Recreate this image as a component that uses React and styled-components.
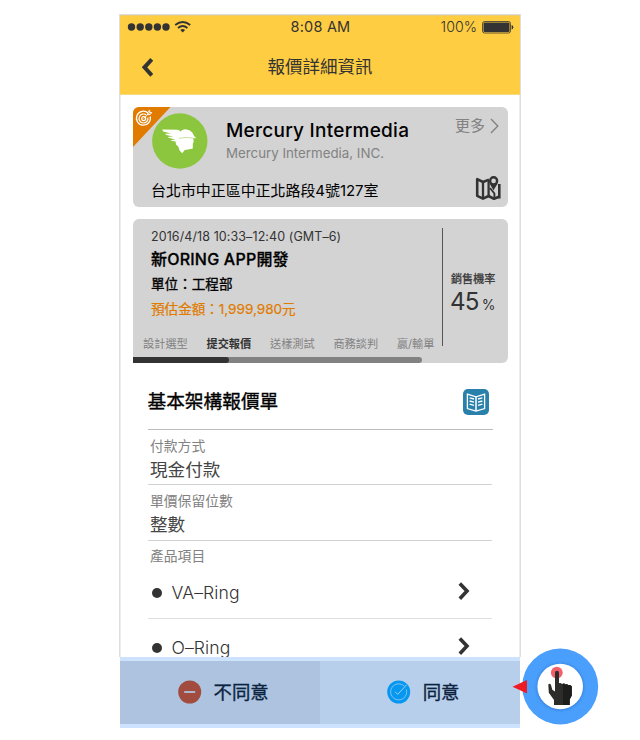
import React from "react";
import styled, { createGlobalStyle } from "styled-components";

const GlobalStyle = createGlobalStyle`
  * { box-sizing: border-box; }
  body {
    margin: 0;
    background: #fff;
    color: #333;
    font-family: Inter, "Noto Sans CJK TC", sans-serif;
  }
`;

const Text = styled.span`
  display: block;
  flex: none;
  white-space: nowrap;
  font-size: ${(p) => p.$size}px;
  line-height: ${(p) => p.$line || 20}px;
  letter-spacing: ${(p) => p.$track || 0}px;
  color: ${(p) => p.$color || "#333"};
  font-weight: ${(p) => p.$weight || 400};
  -webkit-text-stroke: ${(p) => p.$stroke || 0}px currentColor;
`;

const Page = styled.div`
  position: relative;
  width: 640px;
  height: 740px;
  overflow: hidden;
  padding: 14px 0 0 119px;
`;

const Phone = styled.div`
  display: flex;
  flex-direction: column;
  width: 402px;
`;

const Screen = styled.div`
  height: 643px;
  border: 1px solid #dedede;
  border-bottom: 0;
  overflow: hidden;
`;

const Header = styled.header`
  height: 80px;
  background: #ffcd42;
  border-top: 1px solid #eccb70;
  border-bottom: 1px solid #f6d983;
`;

const StatusBar = styled.div`
  display: grid;
  grid-template-columns: 1fr auto 1fr;
  align-items: center;
  height: 22px;
  padding: 0 6px 0 7px;
`;

const StatusGroup = styled.div`
  display: flex;
  align-items: center;
  gap: 5px;
  justify-content: ${(p) => (p.$end ? "flex-end" : "flex-start")};
`;

const NavBar = styled.div`
  display: grid;
  grid-template-columns: 1fr auto 1fr;
  align-items: center;
  height: 57px;
  padding: 0 21px;
`;

const Body = styled.main`
  height: 562px;
  padding: 12px 11px 0 11.5px;
  border: solid #ededed;
  border-width: 0 1px;
  overflow: hidden;
`;

const Card = styled.section`
  position: relative;
  width: 375px;
  border-radius: 6px;
  background: #d3d3d3;
  overflow: hidden;
`;

const CompanyCard = styled(Card)`
  height: 100px;
  margin-bottom: 12px;
`;

const CornerBadge = styled.svg`
  position: absolute;
  left: 0;
  top: 0;
`;

const CompanyTop = styled.div`
  display: flex;
  height: 66px;
  padding: 6px 8.5px 0 19px;
`;

const CompanyNames = styled.div`
  flex: 1;
  padding: 5px 0 0 18.5px;
`;

const MoreLink = styled.div`
  display: flex;
  align-items: center;
  gap: 5px;
  height: 26px;
`;

const AddressRow = styled.div`
  display: flex;
  justify-content: space-between;
  height: 34px;
  padding: 2px 5.5px 0 18.5px;
`;

const Address = styled.div`
  padding-top: 6px;
`;

const DealCard = styled(Card)`
  height: 144px;
  border-bottom-left-radius: 0;
`;

const DealMain = styled.div`
  display: flex;
  height: 138px;
`;

const DealInfo = styled.div`
  width: 309.5px;
  padding: 8px 0 0 18.5px;
`;

const Stages = styled.div`
  display: flex;
  justify-content: space-between;
  width: 291.5px;
  margin: 13px 0 0 -8px;
`;

const Chance = styled.div`
  width: 54px;
  height: 118px;
  margin-top: 9px;
  padding: 41px 0 0 8px;
  border-left: 1px solid #555;
`;

const ChanceValue = styled.div`
  display: flex;
  align-items: baseline;
  margin-left: -1px;
  gap: 3px;
`;

const Track = styled.div`
  width: 289.5px;
  height: 6px;
  border-radius: 0 3px 3px 0;
  background: #828282;
`;

const Fill = styled.div`
  width: 96.5px;
  height: 6px;
  border-radius: 0 3px 3px 0;
  background: #333;
`;

const QuoteHead = styled.div`
  display: flex;
  justify-content: space-between;
  align-items: center;
  width: 345px;
  height: 67px;
  margin-left: 15px;
  padding: 11px 4px 0 0;
  border-bottom: 1px solid #bcbcbc;
`;

const Field = styled.div`
  width: 344px;
  height: ${(p) => p.$height}px;
  margin-left: 15px;
  padding: ${(p) => p.$top}px 0 0 2.5px;
  border-bottom: ${(p) => (p.$plain ? "0" : "1px solid #d2d2d2")};
`;

const ProductRow = styled.div`
  display: flex;
  align-items: center;
  width: 344px;
  height: 55px;
  margin-left: 15px;
  padding: 1px 22px 0 4px;
  border-bottom: 1px solid #dedede;
`;

const Dot = styled.i`
  width: 10px;
  height: 10px;
  margin: 2px 10px 0 0;
  border-radius: 50%;
  background: #333;
`;

const ProductName = styled.div`
  flex: 1;
  padding-top: 3px;
`;

const Footer = styled.footer`
  display: grid;
  grid-template-columns: 1fr 1fr;
  height: 71px;
  margin: 0 1px;
  padding: 4px 0 4px;
  background: #cce2ff;
`;

const Action = styled.button`
  display: flex;
  align-items: center;
  gap: 12px;
  padding: 0 0 1px ${(p) => p.$indent}px;
  border: 0;
  background: ${(p) => p.$bg};
  font-family: inherit;
`;

const TouchHint = styled.svg`
  position: absolute;
  left: 510px;
  top: 645px;
`;

const Chevron = ({ back }) => (
  <svg width="12" height="20" viewBox="0 0 12 20">
    <path
      d={back ? "M10.8 2.3L3.5 10.3L10.8 18.3" : "M1.8 1.4L9 9.1L1.8 16.8"}
      fill="none" stroke="#333" strokeWidth={back ? 4 : 3.6}
    />
  </svg>
);

const Signal = () => (
  <svg width="64" height="16" viewBox="0 0 64 16">
    {[4.5, 13.2, 21.8, 30.4, 39].map((x) => (
      <circle key={x} cx={x} cy="8" r="3.7" fill="#333" />
    ))}
    <g fill="none" stroke="#333" strokeWidth="1.9">
      <path d="M48.2 6.1Q55.7 .1 63.2 6.1" />
      <path d="M51 9Q55.7 5.2 60.4 9" />
    </g>
    <path d="M53.3 11Q55.7 9.1 58.1 11L55.7 13.6Z" fill="#333" />
  </svg>
);

const Battery = () => (
  <svg width="32" height="13" viewBox="0 0 32 13">
    <rect x=".5" y=".5" width="28" height="11.5" rx="2" fill="none" stroke="#333" strokeWidth=".8" />
    <rect x="1.5" y="1.5" width="26" height="9.5" rx="1" fill="#333" />
    <path d="M29.6 4Q31.3 4.6 31.3 6.3T29.6 8.6Z" fill="#333" />
  </svg>
);

const MercuryLogo = () => (
  <svg width="56" height="56" viewBox="0 0 56 56">
    <circle cx="27.8" cy="28" r="27.7" fill="#8cc63f" />
    <path
      d="M10.2 16.4L25.5 16.8Q28 17.2 28.6 18.8Q29.6 16.4 33.5 16.3Q38 16.6 40.3 19.4Q41.4 22.6 44.2 25L41.2 25.6L41.7 29L40.8 30.5V35.6L36 36.4L32.8 37L30.2 40.2L27.6 37.6L26.4 33.8L24 31.5L23.6 28.6L19.2 27.8V26.9L23.5 26.6L16.4 24.8V23.8L21.5 23.7L13.6 21.8V20.8L19 20.6L11.2 18.4Z"
      fill="#fff"
    />
    <path d="M27 25.4Q34 23.4 42.5 25.3" stroke="#8cc63f" strokeWidth=".5" fill="none" />
  </svg>
);

const TargetBadge = () => (
  <CornerBadge width="40" height="41" viewBox="0 0 40 41">
    <path d="M0 0H37.5L0 40Z" fill="#e07b00" />
    <g fill="none" stroke="#fff">
      <path d="M15.2 6.1A7 7 0 1 0 17.2 9.5" strokeWidth="1.3" />
      <path d="M13.3 8A4.5 4.5 0 1 0 14.9 10.6" strokeWidth="1.2" />
      <circle cx="10.7" cy="11.6" r="2" strokeWidth="1.2" />
      <path d="M10.7 11.6L16.7 5.6M14.7 7.6V5L16.7 3.2V5.6H18.7L17.1 7.6H14.7" strokeWidth="1" />
    </g>
  </CornerBadge>
);

const MapIcon = () => (
  <svg width="27" height="26" viewBox="0 0 27 26">
    <g fill="none" stroke="#333" strokeWidth="2.6" strokeLinejoin="round">
      <path d="M14 4.6L8 7L2.2 4.2V20.8L8 23.6L13.6 21L19 23.8L24.6 21.5" />
      <path d="M8 7V23.6M13.6 5V21" strokeWidth="2.3" />
      <path d="M24.3 9V23.6" />
    </g>
    <path
      fillRule="evenodd"
      d="M18.6 1A4.6 4.6 0 0 0 14 5.8C14 9 16.8 11.5 18.6 15.6C20.4 11.5 23.3 9 23.3 5.8A4.6 4.6 0 0 0 18.6 1ZM18.6 3.6A2.3 2.3 0 1 1 18.6 8.2A2.3 2.3 0 1 1 18.6 3.6Z"
      fill="#333"
    />
    <path d="M15 13L19.4 18.5V23" stroke="#333" strokeWidth="1.9" fill="none" />
  </svg>
);

const BookIcon = () => (
  <svg width="26" height="26" viewBox="0 0 26 26">
    <rect width="26" height="26" rx="5" fill="#2980ab" />
    <g fill="none" stroke="#fff" strokeWidth="1.3">
      <path d="M4.4 5.2L13 7.8L21.6 5.2V19.5L13 22L4.4 19.5Z" />
      <path d="M13 7.8V22" strokeWidth="1.5" />
      <path d="M6.6 8.8L11 10M6.6 12L11 13.2M6.6 15.2L11 16.4M19.4 8.8L15 10M19.4 12L15 13.2M19.4 15.2L15 16.4" />
    </g>
  </svg>
);

const MinusIcon = () => (
  <svg width="24" height="24" viewBox="0 0 24 24">
    <circle cx="11.7" cy="12" r="11.5" fill="#a24b3f" />
    <path d="M6.2 12H17.2" stroke="#adc3e0" strokeWidth="1.8" />
  </svg>
);

const CheckIcon = () => (
  <svg width="24" height="24" viewBox="0 0 24 24">
    <circle cx="11.7" cy="12" r="11.5" fill="#0698f0" />
    <g fill="none" stroke="#9fcdf3" strokeWidth=".8">
      <path d="M17.1 6A8 8 0 1 0 19.3 9.5" />
      <path d="M8 11.7L10.7 14.4L19.9 4.5" strokeWidth="1" />
    </g>
  </svg>
);

const Hint = () => (
  <TouchHint width="90" height="82" viewBox="0 0 90 82">
    <defs>
      <filter id="halo" x="-20%" y="-20%" width="140%" height="140%">
        <feGaussianBlur stdDeviation="1.6" />
      </filter>
    </defs>
    <circle cx="50.2" cy="41.5" r="38" fill="#4a9ffd" />
    <circle cx="50.2" cy="41.8" r="23.6" fill="#2c72c8" opacity=".65" filter="url(#halo)" />
    <circle cx="50.2" cy="41.5" r="22.8" fill="#fff" />
    <circle cx="46.8" cy="27.6" r="5.9" fill="#f26069" />
    <path
      d="M45 28Q45 25.8 47 25.8T49 28V38.2Q50.7 37.5 52 39Q54 38 55.5 39.6Q57 38.7 58.5 40.2Q60 39.8 61.8 41.3V50.5L59.7 54.5V60H44V55L38.8 47.8L38.3 39.5Q39.8 37.8 41 40L42.3 44.7L45 46.5Z"
      fill="#2c2c2a"
    />
    <path d="M53 38.7Q54.5 38 55.5 39.6Q57 38.7 58.5 40.2Q60 39.8 61.8 41.3V50.5L59.7 54.5V60H53Z" fill="#1d1d1c" />
    <path d="M2.5 41.7L17 35V48.4Z" fill="#ed1c24" />
  </TouchHint>
);

const stages = ["設計選型", "提交報價", "送樣測試", "商務談判", "贏/輸單"];
const products = ["VA–Ring", "O–Ring"];

export default function App() {
  return (
    <Page>
      <GlobalStyle />
      <Phone>
        <Screen>
          <Header>
            <StatusBar>
              <StatusGroup><Signal /></StatusGroup>
              <Text $size={14.5} $track={0.2}>8:08 AM</Text>
              <StatusGroup $end>
                <Text $size={14.2} $weight={300}>100%</Text>
                <Battery />
              </StatusGroup>
            </StatusBar>
            <NavBar>
              <Chevron back />
              <Text $size={17.5}>報價詳細資訊</Text>
            </NavBar>
          </Header>
          <Body>
            <CompanyCard>
              <TargetBadge />
              <CompanyTop>
                <MercuryLogo />
                <CompanyNames>
                  <Text $size={19} $line={25} $track={0.26} $weight={500} $color="#000">Mercury Intermedia</Text>
                  <Text $size={13.3} $color="#828282">Mercury Intermedia, INC.</Text>
                </CompanyNames>
                <MoreLink>
                  <Text $size={15} $color="#828282">更多</Text>
                  <svg width="9" height="16" viewBox="0 0 9 16">
                    <path d="M1 1L7.8 8L1 15" fill="none" stroke="#828282" strokeWidth="1.4" />
                  </svg>
                </MoreLink>
              </CompanyTop>
              <AddressRow>
                <Address>
                  <Text $size={15} $track={-0.06} $color="#000">台北市中正區中正北路段4號127室</Text>
                </Address>
                <MapIcon />
              </AddressRow>
            </CompanyCard>
            <DealCard>
              <DealMain>
                <DealInfo>
                  <Text $size={12.5} $track={0.09}>2016/4/18 10:33–12:40 (GMT–6)</Text>
                  <Text $size={16} $line={25} $track={0.22} $weight={500} $stroke={0.3} $color="#000">新ORING APP開發</Text>
                  <Text $size={13.6} $line={25} $color="#000" $stroke={0.3}>單位：工程部</Text>
                  <Text $size={13.6} $line={24} $track={-0.03} $color="#e07b00" $stroke={0.2}>預估金額：1,999,980元</Text>
                  <Stages>
                    {stages.map((s, i) => (
                      <Text key={s} $size={11.2} $weight={i === 1 ? 700 : 400} $color={i === 1 ? "#333" : "#828282"}>
                        {s}
                      </Text>
                    ))}
                  </Stages>
                </DealInfo>
                <Chance>
                  <Text $size={11.1} $stroke={0.25}>銷售機率</Text>
                  <ChanceValue>
                    <Text $size={24.2} $track={-0.8} $line={26}>45</Text>
                    <Text $size={14}>%</Text>
                  </ChanceValue>
                </Chance>
              </DealMain>
              <Track><Fill /></Track>
            </DealCard>
            <QuoteHead>
              <Text $size={18.7} $color="#000" $stroke={0.35}>基本架構報價單</Text>
              <BookIcon />
            </QuoteHead>
            <Field $height={55} $top={5}>
              <Text $size={13.8} $line={23} $color="#828282">付款方式</Text>
              <Text $size={17.6} $line={24} $color="#444">現金付款</Text>
            </Field>
            <Field $height={56} $top={5}>
              <Text $size={13.8} $line={23} $color="#828282">單價保留位數</Text>
              <Text $size={17.6} $line={24} $color="#444">整數</Text>
            </Field>
            <Field $height={23} $top={4} $plain>
              <Text $size={13.8} $line={22} $color="#828282">產品項目</Text>
            </Field>
            {products.map((name) => (
              <ProductRow key={name}>
                <Dot />
                <ProductName><Text $size={17.6} $track={0.1} $weight={300}>{name}</Text></ProductName>
                <Chevron />
              </ProductRow>
            ))}
          </Body>
        </Screen>
        <Footer>
          <Action $bg="#adc3e0" $indent={57.5}>
            <MinusIcon />
            <Text $size={18.4} $line={22} $color="#0c2340" $stroke={0.35}>不同意</Text>
          </Action>
          <Action $bg="#b8cfeb" $indent={66.7}>
            <CheckIcon />
            <Text $size={18.4} $line={22} $color="#0c2340" $stroke={0.35}>同意</Text>
          </Action>
        </Footer>
      </Phone>
      <Hint />
    </Page>
  );
}
